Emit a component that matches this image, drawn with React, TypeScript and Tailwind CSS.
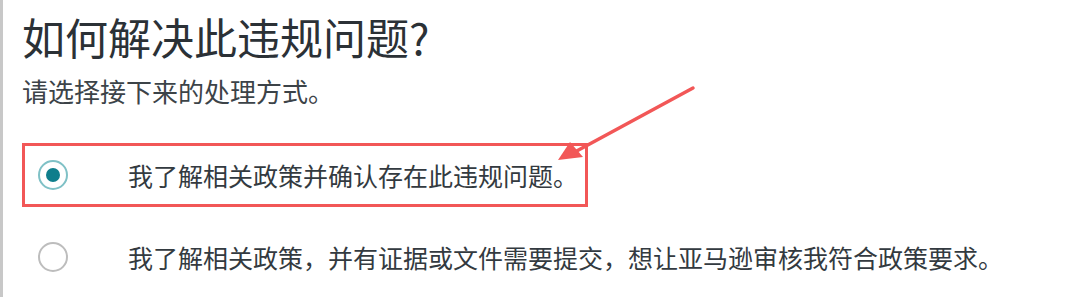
import React from "react";

function RadioOn() {
  return (
    <span className="flex h-[30px] w-[30px] shrink-0 items-center justify-center rounded-full border-2 border-[#7fc1c6] bg-white">
      <span className="h-[14px] w-[14px] rounded-full bg-[#0f7e8c]" />
    </span>
  );
}

function RadioOff() {
  return (
    <span className="block h-[30px] w-[30px] shrink-0 rounded-full border-2 border-[#bdbdbd] bg-white" />
  );
}

export default function App() {
  const font = { fontFamily: '"Noto Sans CJK SC", "Noto Sans", sans-serif' };
  return (
    <div
      className="relative h-[297px] w-[1080px] overflow-hidden border-l-[3px] border-[#c8c8c8] bg-white text-[#333a40]"
      style={font}
    >
      <div className="pl-[19px] pt-[11px]">
        <h1 className="text-[43px] leading-[50px] font-normal text-[#2b3136]">如何解决此违规问题?</h1>
        <p className="mt-[14px] text-[26px] leading-[32px] text-[#3c4348]">请选择接下来的处理方式。</p>
        <div className="mt-[36px] flex w-[566px] items-center border-[3px] border-[#f25757] py-[14px] pl-[13px]">
          <RadioOn />
          <span className="ml-[60px] text-[25px] leading-[30px]">我了解相关政策并确认存在此违规问题。</span>
        </div>
        <div className="mt-[35px] flex items-center pl-[16px]">
          <RadioOff />
          <span className="ml-[60px] text-[25px] leading-[30px]">
            我了解相关政策，并有证据或文件需要提交，想让亚马逊审核我符合政策要求。
          </span>
        </div>
      </div>
      <svg
        className="pointer-events-none absolute left-0 top-0"
        width="1080"
        height="297"
        viewBox="0 0 1080 297"
      >
        <line x1="690" y1="88" x2="570" y2="153" stroke="#f25757" strokeWidth="3.5" strokeLinecap="round" />
        <polygon points="555,160 567,142 580,157" fill="#f25757" />
      </svg>
    </div>
  );
}
